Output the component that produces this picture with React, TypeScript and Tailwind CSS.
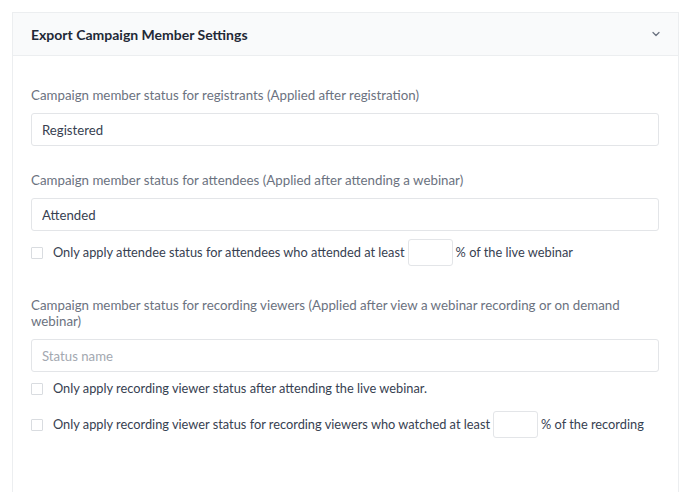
import {ChevronDown} from 'lucide-react';

function Label({children}: {children: React.ReactNode}) {
  return (
    <div className="text-[13.3px] leading-4 text-[#6b7280] mb-[10px]">
      {children}
    </div>
  );
}

function TextField({value, placeholder}: {value?: string; placeholder?: string}) {
  return (
    <input
      defaultValue={value}
      placeholder={placeholder}
      className="block w-full h-[33px] rounded-[3px] border border-[#e3e5e8] px-[10px] text-[13.2px] text-[#374151] placeholder:text-[#a3a8b0] outline-none"
    />
  );
}

function CheckRow({children}: {children: React.ReactNode}) {
  return (
    <label className="flex items-center whitespace-nowrap text-[12.8px] leading-[17px] text-[#374151]">
      <span className="w-3 h-3 border border-[#d9dce0] rounded-[1px] bg-white shrink-0 mr-[10px]" />
      {children}
    </label>
  );
}

function PercentBox() {
  return (
    <input className="mx-[3px] w-[45px] h-[27px] shrink-0 rounded-[3px] border border-[#e3e5e8] outline-none" />
  );
}

export default function App() {
  return (
    <div
      className="min-h-screen bg-white pt-3 pl-3 pr-[9px]"
      style={{fontFamily: 'Lato, "Noto Sans", sans-serif'}}
    >
      <div className="border border-[#eceef0] border-b-0 h-[480px]">
        <div className="flex items-center justify-between h-[43px] bg-[#f9fafb] border-b border-[#eceef0] pl-[18px] pr-[16px]">
          <h2 className="text-[14px] font-bold text-[#1f2937]">
            Export Campaign Member Settings
          </h2>
          <ChevronDown className="w-3 h-3 text-[#6b7280]" strokeWidth={2.5} />
        </div>

        <div className="pl-[18px] pr-[19px] pt-[31px]">
          <Label>Campaign member status for registrants (Applied after registration)</Label>
          <TextField value="Registered" />

          <div className="mt-[26px]">
            <Label>Campaign member status for attendees (Applied after attending a webinar)</Label>
            <TextField value="Attended" />
          </div>

          <div className="mt-[8px]">
            <CheckRow>
              Only apply attendee status for attendees who attended at least
              <PercentBox />
              % of the live webinar
            </CheckRow>
          </div>

          <div className="mt-[31px]">
            <Label>
              Campaign member status for recording viewers (Applied after view a webinar recording or on demand webinar)
            </Label>
            <TextField placeholder="Status name" />
          </div>

          <div className="mt-[8px]">
            <CheckRow>Only apply recording viewer status after attending the live webinar.</CheckRow>
          </div>

          <div className="mt-[14px]">
            <CheckRow>
              Only apply recording viewer status for recording viewers who watched at least
              <PercentBox />
              % of the recording
            </CheckRow>
          </div>
        </div>
      </div>
    </div>
  );
}
